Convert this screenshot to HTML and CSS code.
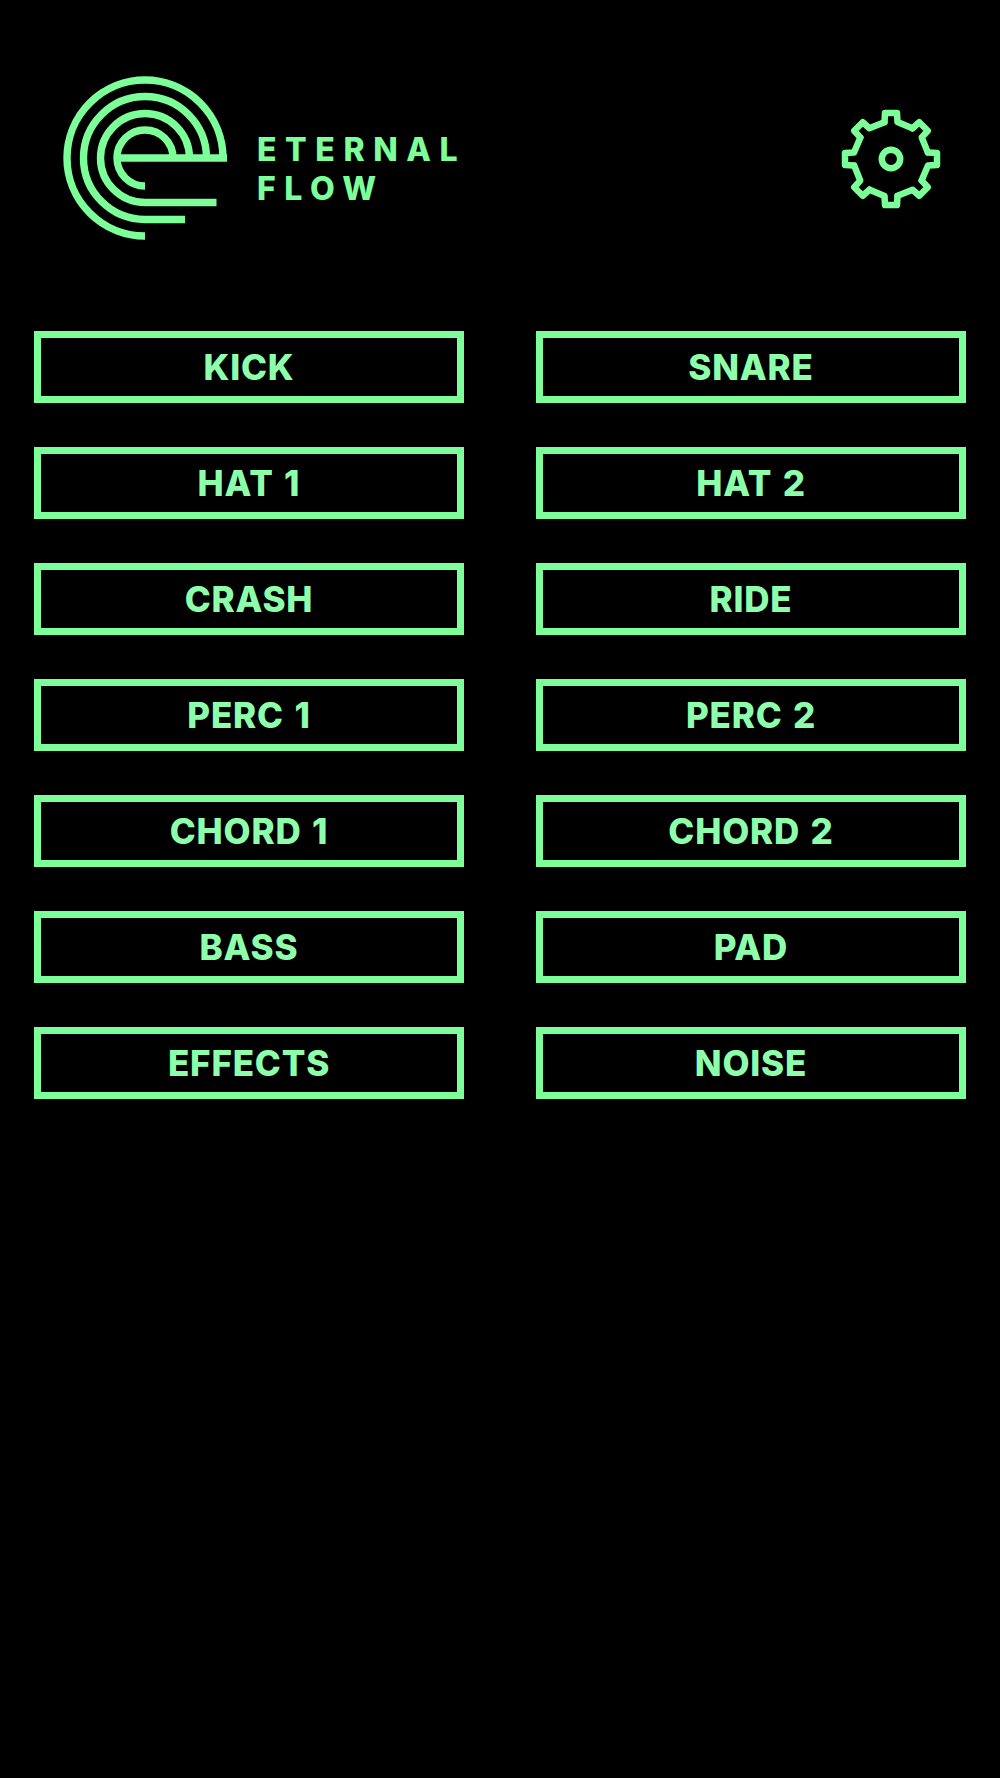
FILE: index.html
```html
<!DOCTYPE html>
<html lang="en">
<head>
<meta charset="utf-8">
<title>Eternal Flow</title>
<link rel="stylesheet" href="styles.css">
</head>
<body>
<main class="app">
  <header class="header">
    <div class="brand">
      <svg class="logo" viewBox="0 0 164 164" aria-hidden="true">
        <g fill="none" stroke="currentColor" stroke-width="7.4">
          <path d="M82 160A78 78 0 1 1 160 82"/>
          <path d="M122 143.500H82A61.500 61.500 0 1 1 143.500 82"/>
          <path d="M153.500 126.500H82A44.500 44.500 0 1 1 126.500 82"/>
          <path d="M82 110A28 28 0 1 1 110 82"/>
          <path d="M54 82H164"/>
        </g>
      </svg>
      <div class="wordmark">
        <span>ETERNAL</span>
        <span>FLOW</span>
      </div>
    </div>
    <button class="settings" type="button" aria-label="Settings">
      <svg class="gear" viewBox="-50 -50 100 100" aria-hidden="true">
        <defs>
          <path id="tooth" d="M-6.500-37L-6-46H6L6.500-37L21.300-30.700"/>
        </defs>
        <g fill="none" stroke="currentColor" stroke-width="6.500" stroke-linejoin="round" stroke-linecap="round">
          <use href="#tooth"/>
          <use href="#tooth" transform="rotate(45)"/>
          <use href="#tooth" transform="rotate(90)"/>
          <use href="#tooth" transform="rotate(135)"/>
          <use href="#tooth" transform="rotate(180)"/>
          <use href="#tooth" transform="rotate(225)"/>
          <use href="#tooth" transform="rotate(270)"/>
          <use href="#tooth" transform="rotate(315)"/>
          <circle r="9.200"/>
        </g>
      </svg>
    </button>
  </header>
  <section class="pads">
    <button class="pad" type="button">KICK</button>
    <button class="pad" type="button">SNARE</button>
    <button class="pad" type="button">HAT 1</button>
    <button class="pad" type="button">HAT 2</button>
    <button class="pad" type="button">CRASH</button>
    <button class="pad" type="button">RIDE</button>
    <button class="pad" type="button">PERC 1</button>
    <button class="pad" type="button">PERC 2</button>
    <button class="pad" type="button">CHORD 1</button>
    <button class="pad" type="button">CHORD 2</button>
    <button class="pad" type="button">BASS</button>
    <button class="pad" type="button">PAD</button>
    <button class="pad" type="button">EFFECTS</button>
    <button class="pad" type="button">NOISE</button>
  </section>
</main>
</body>
</html>
```
FILE: styles.css
```css
* { box-sizing: border-box; }
html, body { margin: 0; background: #000; }
.app {
  min-height: 1778px;
  padding: 75px 34px 0;
  color: #7CFF98;
  font-family: Inter, "Liberation Sans", sans-serif;
}
.header {
  display: flex;
  align-items: center;
  justify-content: space-between;
  height: 164px;
  padding: 0 25px 0 29px;
}
.brand { display: flex; align-items: center; }
.logo { display: block; width: 164px; height: 164px; margin-top: 1px; }
.wordmark {
  display: flex;
  flex-direction: column;
  margin-left: 30px;
  margin-top: 24px;
  font-family: Inter, sans-serif;
  font-weight: 800;
  font-size: 32px;
  line-height: 39px;
  letter-spacing: 8.6px;
}
.settings {
  margin-top: 4px;
  padding: 0;
  border: 0;
  background: none;
  color: inherit;
}
.gear { display: block; width: 100px; height: 100px; }
.pads {
  display: grid;
  grid-template-columns: 430px 430px;
  column-gap: 72px;
  row-gap: 44px;
  margin-top: 92px;
}
.pad {
  height: 72px;
  padding: 0;
  border: 7px solid #7CFF98;
  background: #000;
  color: #8DFFAB;
  font-family: Inter, sans-serif;
  font-weight: 800;
  font-size: 35px;
  line-height: 1;
  letter-spacing: 0.8px;
  word-spacing: 2px;
}
```
